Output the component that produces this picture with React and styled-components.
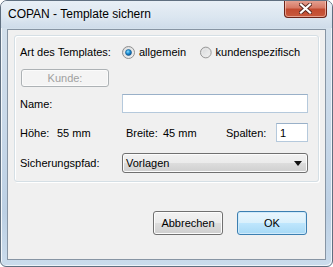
import React from 'react';
import styled, { createGlobalStyle } from 'styled-components';

const Global = createGlobalStyle`
    html, body { margin:0; padding:0; background:#ffffff; }
    body { font-family:"Liberation Sans", Arial, sans-serif; font-size:11px; color:#000; }
    * { box-sizing:border-box; }
`;

const Window = styled.div`
    width:333px;
    height:267px;
    display:flex;
    flex-direction:column;
    border:1px solid #5f6f80;
    border-radius:7px 7px 6px 6px;
    background:linear-gradient(180deg,#dfe8f1 0%,#d2dfeb 12%,#c9d9e9 45%,#bcd0e4 80%,#cbdcec 100%);
    box-shadow:inset 1px 1px 0 #f4f8fb, inset -1px -1px 0 #eef4f9;
    overflow:hidden;
`;

const TitleBar = styled.div`
    height:27px;
    flex:none;
    display:flex;
    align-items:flex-start;
    padding-left:7px;
    background:linear-gradient(180deg,#e8eff6 0%,#dbe6f0 60%,#cfdcea 100%);
`;

const TitleText = styled.div`
    font-size:12px;
    line-height:27px;
    color:#000;
    flex:1;
    text-shadow:0 0 6px #f6fafd;
`;

const CloseBtn = styled.div`
    width:43px;
    height:18px;
    margin-top:-1px;
    margin-right:5px;
    border:1px solid #6b2318;
    border-top:none;
    border-radius:0 0 4px 4px;
    background:linear-gradient(180deg,#e6a596 0%,#d77a66 45%,#c24a30 55%,#c8593c 100%);
    box-shadow:inset 0 0 0 1px rgba(255,220,210,0.55);
    display:flex;
    align-items:center;
    justify-content:center;
`;

const Client = styled.div`
    flex:1;
    margin:1px 6px 6px 6px;
    border:1px solid #8795a4;
    background:#f0f0f0;
    display:flex;
    flex-direction:column;
`;

const Group = styled.div`
    margin:5px 6px 0 6px;
    height:147px;
    border:1px solid #d5dfe5;
    border-radius:3px;
    box-shadow:inset 1px 1px 0 #ffffff, 1px 1px 0 #ffffff;
    padding:6px 10px 0 5px;
    display:flex;
    flex-direction:column;
`;

const Row = styled.div`
    height:${p => p.h}px;
    margin-bottom:${p => p.gap || 0}px;
    display:flex;
    align-items:center;
`;

const Label = styled.div`
    width:${p => p.w || 102}px;
    flex:none;
    white-space:nowrap;
`;

const Option = styled.label`
    width:${p => p.w}px;
    display:flex;
    align-items:center;
    gap:4px;
    white-space:nowrap;
`;

const PushBtn = styled.div`
    width:${p => p.w}px;
    height:${p => p.h}px;
    display:flex;
    align-items:center;
    justify-content:center;
    border:1px solid ${p => p.disabled ? '#adb2b5' : p.primary ? '#3c7fb1' : '#707070'};
    border-radius:3px;
    color:${p => p.disabled ? '#a0a0a0' : '#000'};
    background:${p => p.disabled
        ? '#f4f4f4'
        : p.primary
            ? 'linear-gradient(180deg,#eaf6fd 0%,#d9f0fc 50%,#bee6fd 51%,#a7d9f5 100%)'
            : 'linear-gradient(180deg,#f2f2f2 0%,#ebebeb 50%,#dddddd 51%,#cfcfcf 100%)'};
    box-shadow:inset 0 0 0 1px ${p => p.disabled ? '#fbfbfb' : p.primary ? '#cfeafb' : '#fcfcfc'};
    margin-left:${p => p.ml || 0}px;
`;

const TextBox = styled.div`
    width:${p => p.w}px;
    height:19px;
    margin-left:${p => p.ml || 0}px;
    background:#fff;
    border:1px solid #b5c9dc;
    border-top-color:#99b0c8;
    padding:0 3px;
    display:flex;
    align-items:center;
`;

const Value = styled.div`
    width:${p => p.w}px;
    flex:none;
    white-space:nowrap;
`;

const Combo = styled.div`
    width:186px;
    height:20px;
    border:1px solid #707070;
    border-radius:3px;
    background:linear-gradient(180deg,#f2f2f2 0%,#ebebeb 50%,#dddddd 51%,#cfcfcf 100%);
    box-shadow:inset 0 0 0 1px #fcfcfc;
    display:flex;
    align-items:center;
    justify-content:space-between;
    padding:0 5px 0 3px;
`;

const Footer = styled.div`
    flex:1;
    display:flex;
    justify-content:flex-end;
    align-items:flex-start;
    padding:29px 18px 0 0;
`;

const Radio = ({ checked }) => (
    <svg width="13" height="13" viewBox="0 0 13 13">
        <defs>
            <linearGradient id={checked ? 'rg1' : 'rg0'} x1="0" y1="0" x2="1" y2="1">
                <stop offset="0" stopColor="#d2d4d6" />
                <stop offset="1" stopColor="#f6f6f6" />
            </linearGradient>
            <radialGradient id="dot" cx="0.4" cy="0.35" r="0.7">
                <stop offset="0" stopColor="#8ee0ff" />
                <stop offset="0.5" stopColor="#1b8fd6" />
                <stop offset="1" stopColor="#0a4a8a" />
            </radialGradient>
        </defs>
        <circle cx="6.5" cy="6.5" r="6" fill={`url(#${checked ? 'rg1' : 'rg0'})`} stroke="#8f8f8f" strokeWidth="1" />
        <circle cx="6.5" cy="6.5" r="4.2" fill="none" stroke="#e9e9e9" strokeWidth="1" />
        {checked && <circle cx="6.5" cy="6.5" r="3" fill="url(#dot)" stroke="#1a5a8c" strokeWidth="0.6" />}
    </svg>
);

const App = () => {
    return (
        <>
            <Global />
            <Window>
                <TitleBar>
                    <TitleText>COPAN - Template sichern</TitleText>
                    <CloseBtn>
                        <svg width="13" height="11" viewBox="0 0 13 11">
                            <path d="M2 1.5 L11 9.5 M11 1.5 L2 9.5" stroke="#5a2a22" strokeWidth="4" strokeLinecap="square" />
                            <path d="M2 1.5 L11 9.5 M11 1.5 L2 9.5" stroke="#ffffff" strokeWidth="2.2" strokeLinecap="square" />
                        </svg>
                    </CloseBtn>
                </TitleBar>
                <Client>
                    <Group>
                        <Row h={20} gap={7}>
                            <Label>Art des Templates:</Label>
                            <Option w={78}><Radio checked /> allgemein</Option>
                            <Option w={100}><Radio /> kundenspezifisch</Option>
                        </Row>
                        <Row h={18} gap={7}>
                            <PushBtn disabled w={88} h={18} ml={1}>Kunde:</PushBtn>
                        </Row>
                        <Row h={19} gap={10}>
                            <Label>Name:</Label>
                            <TextBox w={186} />
                        </Row>
                        <Row h={19} gap={11}>
                            <Value w={37}>Höhe:</Value>
                            <Value w={69}>55 mm</Value>
                            <Value w={37}>Breite:</Value>
                            <Value w={63}>45 mm</Value>
                            <Value w={50}>Spalten:</Value>
                            <TextBox w={32}>1</TextBox>
                        </Row>
                        <Row h={20}>
                            <Label>Sicherungspfad:</Label>
                            <Combo>
                                <span>Vorlagen</span>
                                <svg width="8" height="5" viewBox="0 0 8 5">
                                    <path d="M0 0 H8 L4 5 Z" fill="#111" />
                                </svg>
                            </Combo>
                        </Row>
                    </Group>
                    <Footer>
                        <PushBtn w={70} h={24}>Abbrechen</PushBtn>
                        <PushBtn primary w={70} h={24} ml={14}>OK</PushBtn>
                    </Footer>
                </Client>
            </Window>
        </>
    );
};

export default App;
